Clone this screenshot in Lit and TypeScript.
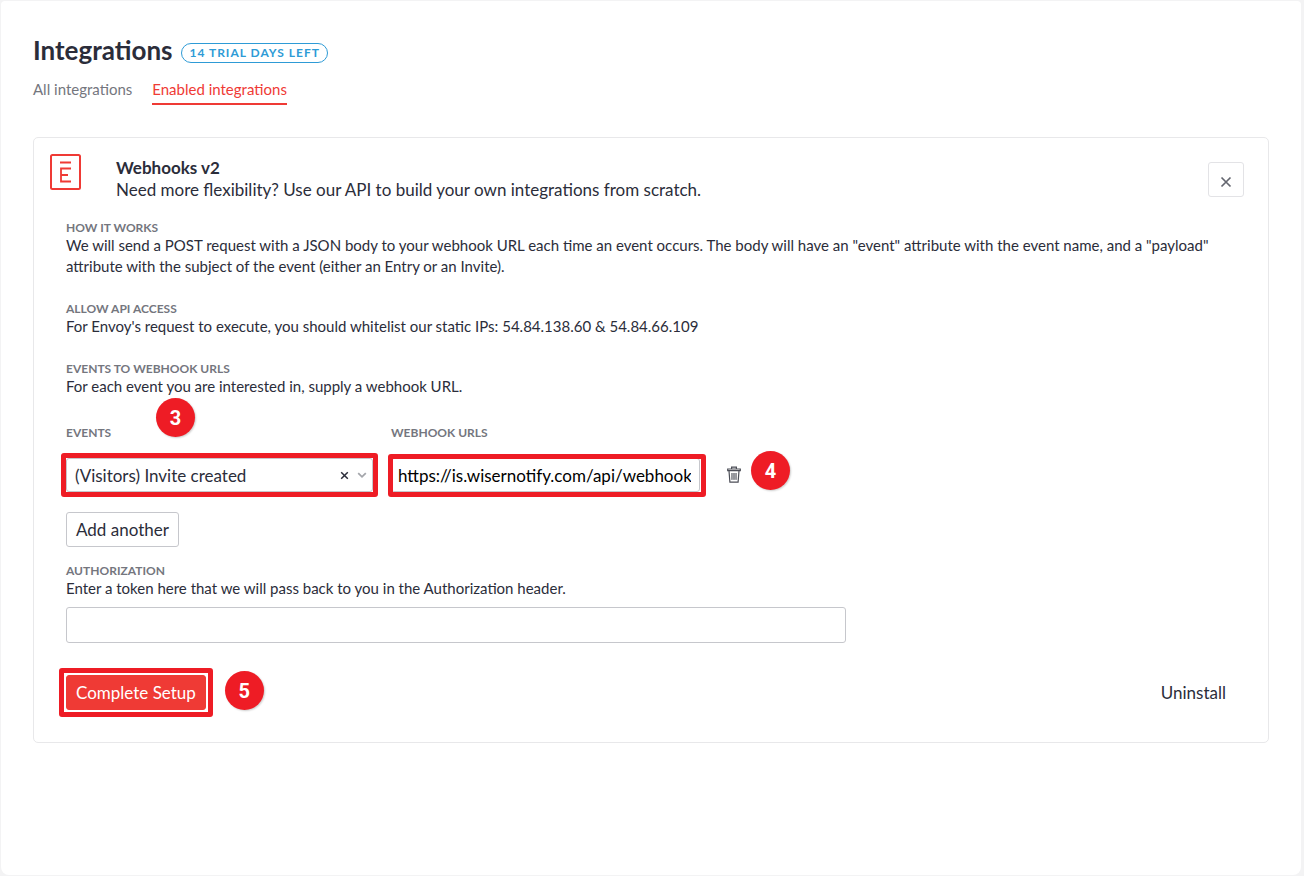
import { LitElement, html, css } from "lit";
import { customElement, state } from "lit/decorators.js";

@customElement("app-root")
export class AppRoot extends LitElement {
  @state() private webhookUrl = "https://is.wisernotify.com/api/webhooks";
  @state() private token = "";

  static styles = css`
    :host {
      display: block;
      box-sizing: border-box;
      min-height: 100vh;
      padding: 1px 3px 1px 1px;
      background: #f3f3f4;
      color: #2b2d3a;
      font-family: Lato, "Liberation Sans", sans-serif;
      font-size: 15px;
      line-height: 21px;
    }
    * {
      box-sizing: border-box;
    }
    h1,
    h2,
    h3,
    p {
      margin: 0;
    }
    button,
    input,
    select {
      font: inherit;
      color: inherit;
      margin: 0;
    }
    button {
      cursor: pointer;
    }
    .panel {
      min-height: calc(100vh - 2px);
      padding: 32px;
      background: #fff;
      border-radius: 4px 4px 8px 8px;
    }
    .heading {
      display: flex;
      align-items: center;
      gap: 9px;
      height: 34px;
    }
    .heading h1 {
      font-size: 26px;
      line-height: 32px;
      font-weight: 700;
    }
    .trial {
      margin-top: 6px;
      padding: 0 7px;
      border: 1px solid #2e9bd6;
      border-radius: 10px;
      color: #2e9bd6;
      font-size: 12px;
      line-height: 18px;
      font-weight: 700;
      letter-spacing: 1px;
    }
    .tabs {
      display: flex;
      gap: 20px;
      margin-top: 12px;
    }
    .tab {
      padding-bottom: 3px;
      border-bottom: 2px solid transparent;
      color: #74767e;
      text-decoration: none;
    }
    .tab.active {
      color: #ef3a35;
      border-color: #ef3a35;
    }
    .card {
      margin-top: 32px;
      padding: 16px 24px 32px 32px;
      border: 1px solid #e8e8ea;
      border-radius: 5px;
    }
    .intro {
      display: flex;
      align-items: flex-start;
      margin-left: -16px;
    }
    .logo {
      flex: none;
      width: 31px;
      height: 36px;
    }
    .about {
      flex: 1;
      margin: 3px 0 0 35px;
      font-size: 17px;
      line-height: 22px;
    }
    .about h2 {
      font-size: 17px;
      line-height: 22px;
      font-weight: 700;
    }
    .close {
      display: grid;
      place-items: center;
      width: 36px;
      height: 35px;
      margin-top: 8px;
      padding: 5px 0 0;
      border: 1px solid #e3e3e6;
      border-radius: 3px;
      background: #fff;
      color: #64666f;
    }
    .note {
      margin-top: 24px;
    }
    .intro + .note {
      margin-top: 19px;
    }
    .caption {
      display: block;
      color: #74767e;
      font-size: 12px;
      line-height: 15px;
      font-weight: 700;
    }
    .mapping {
      display: flex;
      align-items: flex-end;
      gap: 18px;
      margin-top: 28px;
    }
    .field {
      width: 307px;
    }
    .field.wide {
      width: 309px;
    }
    .control {
      position: relative;
      margin-top: 18px;
    }
    .box {
      display: block;
      width: 100%;
      height: 34px;
      padding: 0 8px;
      border: 1px solid #c6c7cc;
      border-radius: 3px;
      background: #fff;
      font-size: 17px;
    }
    .events {
      appearance: none;
      padding-right: 48px;
    }
    .url {
      color: #000;
      padding: 0 8px 0 6px;
    }
    .tools {
      position: absolute;
      inset: 0 6px 0 auto;
      display: flex;
      align-items: center;
      gap: 8px;
      pointer-events: none;
    }
    .clear,
    .trash {
      display: grid;
      padding: 0;
      border: 0;
      background: none;
    }
    .clear {
      pointer-events: auto;
    }
    .frame {
      position: absolute;
      inset: -5px;
      border: 5px solid #ee1c25;
      border-radius: 3px;
      pointer-events: none;
    }
    .url + .frame {
      inset: -4px -6px -5px -3px;
    }
    .action .frame {
      inset: -7px;
    }
    .trash {
      margin: 0 0 9px 9px;
      color: #4c4e57;
    }
    .badge {
      position: absolute;
      display: grid;
      place-items: center;
      width: 39px;
      height: 39px;
      border-radius: 50%;
      background: #ee1c25;
      box-shadow: 1px 1px 2px rgba(0, 0, 0, 0.2);
      color: #fff;
      font-family: Roboto, "Liberation Sans", sans-serif;
      font-size: 20px;
      font-weight: 700;
      line-height: 20px;
    }
    .three {
      left: 90px;
      bottom: 55px;
    }
    .four {
      left: calc(100% + 51px);
      top: -7px;
    }
    .five {
      left: calc(100% + 19px);
      top: -4px;
    }
    .plain {
      height: 35px;
      padding: 0 9px;
      border: 1px solid #c6c7cc;
      border-radius: 3px;
      background: #fff;
      font-size: 17px;
    }
    .add {
      margin-top: 20px;
    }
    .authorization {
      margin-top: 16px;
      max-width: 780px;
    }
    .authorization .box {
      height: 36px;
      margin-top: 8px;
    }
    .footer {
      display: flex;
      align-items: center;
      justify-content: space-between;
      margin-top: 32px;
    }
    .action {
      position: relative;
    }
    .submit {
      display: block;
      border-color: #ef3a35;
      background: #ef3a35;
      color: #fff;
    }
    .uninstall {
      border-color: transparent;
      margin-right: 8px;
    }
  `;

  render() {
    return html`
      <main class="panel">
        <header class="heading">
          <h1>Integrations</h1>
          <span class="trial">14 TRIAL DAYS LEFT</span>
        </header>
        <nav class="tabs">
          <a class="tab" href="#all">All integrations</a>
          <a class="tab active" href="#enabled" aria-current="page">Enabled integrations</a>
        </nav>

        <section class="card">
          <div class="intro">
            <svg class="logo" viewBox="0 0 31 36" fill="none" stroke="#ef3a35" aria-hidden="true">
              <rect x="1" y="1" width="29" height="34" rx="1.5" stroke-width="2" />
              <path d="M10 8.500h11M21 14.500h-10v13h10M11 21h7" stroke-width="1.8" />
            </svg>
            <div class="about">
              <h2>Webhooks v2</h2>
              <p>Need more flexibility? Use our API to build your own integrations from scratch.</p>
            </div>
            <button class="close" type="button" aria-label="Close">
              <svg width="12" height="12" viewBox="0 0 12 12" fill="none" stroke="currentColor" stroke-width="1.7">
                <path d="M1.500 1.500l9 9M10.500 1.500l-9 9" />
              </svg>
            </button>
          </div>

          <div class="note">
            <h3 class="caption">HOW IT WORKS</h3>
            <p>
              We will send a POST request with a JSON body to your webhook URL each time an event occurs. The body will
              have an "event" attribute with the event name, and a "payload" attribute with the subject of the event
              (either an Entry or an Invite).
            </p>
          </div>
          <div class="note">
            <h3 class="caption">ALLOW API ACCESS</h3>
            <p>For Envoy's request to execute, you should whitelist our static IPs: 54.84.138.60 &amp; 54.84.66.109</p>
          </div>
          <div class="note">
            <h3 class="caption">EVENTS TO WEBHOOK URLS</h3>
            <p>For each event you are interested in, supply a webhook URL.</p>
          </div>

          <div class="mapping">
            <div class="field">
              <label class="caption" for="events">EVENTS</label>
              <div class="control">
                <select class="box events" id="events">
                  <option>(Visitors) Invite created</option>
                </select>
                <span class="tools">
                  <button class="clear" type="button" aria-label="Clear event">
                    <svg width="9" height="9" viewBox="0 0 9 9" fill="none" stroke="currentColor" stroke-width="1.500">
                      <path d="M1.200 1.200l6.600 6.600M7.800 1.200l-6.600 6.600" />
                    </svg>
                  </button>
                  <svg width="10" height="7" viewBox="0 0 10 7" fill="none" stroke="#a4a6ab" stroke-width="1.800">
                    <path d="M1.200 1.200l3.800 3.600 3.800-3.600" />
                  </svg>
                </span>
                <span class="frame"></span>
                <span class="badge three">3</span>
              </div>
            </div>
            <div class="field wide">
              <label class="caption" for="url">WEBHOOK URLS</label>
              <div class="control">
                <input
                  class="box url"
                  id="url"
                  type="text"
                  .value=${this.webhookUrl}
                  @input=${(e: Event) => (this.webhookUrl = (e.target as HTMLInputElement).value)}
                />
                <span class="frame"></span>
                <span class="badge four">4</span>
              </div>
            </div>
            <button class="trash" type="button" aria-label="Delete webhook">
              <svg width="14" height="17" viewBox="0 0 14 17" fill="none" stroke="currentColor" stroke-width="1.200">
                <path d="M.7 3h12.600v1.700H.7zM4.600 2.800V1.200h4.800v1.600M2 4.800l.9 11.400h8.200L12 4.800" />
                <path d="M4.300 7h5.400v6.800H4.300z" fill="#a3a5aa" stroke="none" />
                <path d="M4.700 7v6.800M7 7v6.800M9.300 7v6.800" stroke="#7d7f86" stroke-width=".8" />
              </svg>
            </button>
          </div>

          <button class="plain add" type="button">Add another</button>

          <div class="authorization">
            <label class="caption" for="token">AUTHORIZATION</label>
            <p>Enter a token here that we will pass back to you in the Authorization header.</p>
            <input
              class="box"
              id="token"
              type="text"
              .value=${this.token}
              @input=${(e: Event) => (this.token = (e.target as HTMLInputElement).value)}
            />
          </div>

          <div class="footer">
            <div class="action">
              <button class="plain submit" type="button">Complete Setup</button>
              <span class="frame"></span>
              <span class="badge five">5</span>
            </div>
            <button class="plain uninstall" type="button">Uninstall</button>
          </div>
        </section>
      </main>
    `;
  }
}
